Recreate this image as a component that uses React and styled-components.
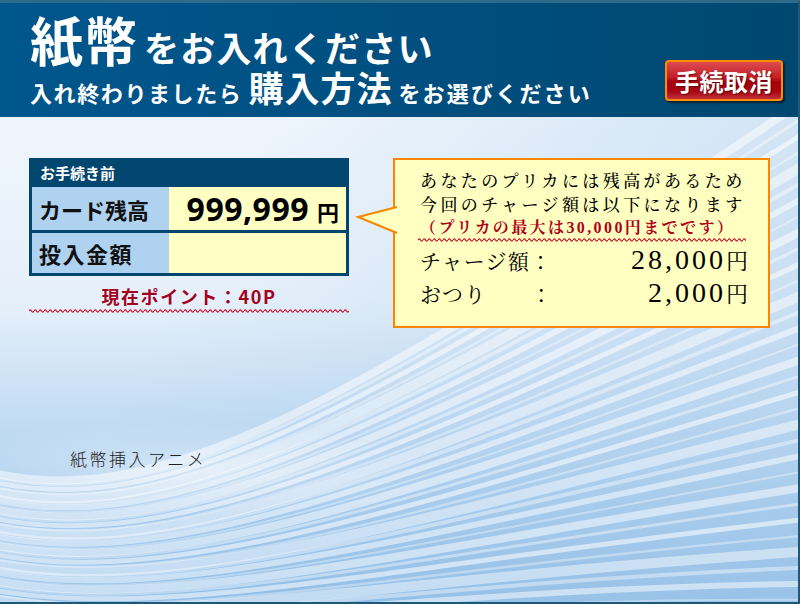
import React, { useId } from "react";
import styled, { createGlobalStyle } from "styled-components";

const Global = createGlobalStyle`
  html, body { margin: 0; padding: 0; background: #ffffff; }
  body { width: 800px; height: 604px; overflow: hidden; font-family: "Noto Sans CJK JP", "Noto Sans", sans-serif; }
`;

const SANS = `"Noto Sans CJK JP", "Noto Sans", sans-serif`;
const SERIF = `"Liberation Serif", "Noto Serif CJK JP", "Noto Sans CJK JP", serif`;

const Screen = styled.div`
  width: 800px;
  height: 604px;
  box-sizing: border-box;
  border-top: 3px solid #2e6a89;
  border-right: 2px solid #1f5877;
  border-bottom: 2px solid #1f5877;
  display: flex;
  flex-direction: column;
  overflow: hidden;
`;

const Header = styled.header`
  height: 114px;
  flex: none;
  box-sizing: border-box;
  padding: 8px 15px 0 30px;
  display: flex;
  justify-content: space-between;
  background: linear-gradient(90deg, #00578c 0%, #004f80 50%, #00486f 100%);
  color: #ffffff;
`;

const Title = styled.div`
  display: flex;
  flex-direction: column;
  font-family: ${SANS};
  font-weight: 700;
`;

const TitleLine = styled.div`
  display: flex;
  align-items: baseline;
  white-space: nowrap;
  height: ${(p) => p.$h}px;
  line-height: ${(p) => p.$h}px;
`;

const Word = styled.span`
  font-size: ${(p) => p.$size}px;
  letter-spacing: ${(p) => p.$ls || 0}px;
  margin-right: ${(p) => p.$mr || 0}px;
`;

const CancelButton = styled.button`
  align-self: flex-end;
  margin-bottom: 16px;
  width: 118px;
  height: 41px;
  box-sizing: border-box;
  border: 2px solid #ff8c00;
  border-radius: 4px;
  background: linear-gradient(180deg, #dc4b52 0%, #c42129 40%, #a3000a 55%, #a80812 80%, #c0303a 100%);
  box-shadow: 2px 2px 2px rgba(0, 0, 0, 0.55);
  color: #ffffff;
  font-family: ${SANS};
  font-weight: 700;
  font-size: 24px;
  letter-spacing: 0.5px;
  text-shadow: 1px 1px 1px rgba(60, 0, 0, 0.7);
  padding: 0;
  line-height: 36px;
`;

const Body = styled.main`
  position: relative;
  flex: 1;
  overflow: hidden;
  background: linear-gradient(180deg, #eef5fc 0%, #e6f0fa 38%, #c3dcf3 62%, #a3c9ec 82%, #8cbbe7 100%);
`;

const Backdrop = styled.svg`
  position: absolute;
  inset: 0;
  width: 100%;
  height: 100%;
  z-index: 0;
`;

const Content = styled.div`
  position: relative;
  z-index: 1;
  padding: 41px 0 0 29px;
`;

const Row = styled.div`
  display: flex;
  align-items: flex-start;
  gap: 44px;
`;

const LeftCol = styled.div`
  width: 320px;
  display: flex;
  flex-direction: column;
`;

const Panel = styled.div`
  width: 320px;
  box-sizing: border-box;
  border: 3px solid #00466e;
  background: #00466e;
  display: grid;
  grid-template-columns: 137px 1fr;
  grid-template-rows: 26px 43px 43px;
`;

const PanelHead = styled.div`
  grid-column: 1 / -1;
  color: #ffffff;
  font-family: ${SANS};
  font-weight: 700;
  font-size: 15px;
  line-height: 24px;
  padding-left: 8px;
`;

const Label = styled.div`
  background: #afd2f1;
  font-family: ${SANS};
  font-weight: 700;
  font-size: 22px;
  letter-spacing: ${(p) => p.$ls || 0}px;
  color: #111111;
  display: flex;
  align-items: center;
  padding-left: 7px;
  margin-top: ${(p) => (p.$sep ? 3 : 0)}px;
`;

const Value = styled.div`
  background: #ffffc4;
  display: flex;
  align-items: baseline;
  justify-content: flex-end;
  padding: 0 7px 0 0;
  margin-top: ${(p) => (p.$sep ? 3 : 0)}px;
  color: #000000;
  line-height: 43px;
`;

const BigNum = styled.span`
  font-family: "Open Sans", "DejaVu Sans", sans-serif;
  font-weight: 700;
  font-size: 32px;
  letter-spacing: 0.5px;
`;

const Yen = styled.span`
  font-family: ${SANS};
  font-weight: 700;
  font-size: 22px;
  margin-left: 8px;
`;

const Points = styled.div`
  margin-top: 8px;
  text-align: center;
  color: #a3001c;
  font-family: ${SANS};
  font-weight: 700;
  font-size: 18px;
  line-height: 24px;
  letter-spacing: 1.6px;
`;

const WaveWrap = styled.div`
  display: flex;
  height: 6px;
  margin-left: ${(p) => p.$ml || 0}px;
`;

const Bubble = styled.div`
  position: relative;
  width: 377px;
  height: 170px;
  box-sizing: border-box;
  border: 2px solid #fa8600;
  background: #ffffc2;
  padding: 10px 0 0 25px;
  font-family: ${SERIF};
  color: #000000;
`;

const Tail = styled.svg`
  position: absolute;
  left: -39px;
  top: 46px;
  overflow: visible;
`;

const Note = styled.div`
  font-size: 17px;
  font-weight: 500;
  letter-spacing: 3.4px;
  line-height: 24px;
  white-space: nowrap;
`;

const Caution = styled.div`
  font-size: 16px;
  letter-spacing: 2.4px;
  line-height: 18px;
  color: #b0001a;
  font-weight: 700;
  white-space: nowrap;
  margin-top: 1px;
`;

const Amount = styled.div`
  display: flex;
  align-items: baseline;
  justify-content: space-between;
  width: 328px;
  height: 33px;
  line-height: 34px;
  white-space: nowrap;
`;

const AmountLabel = styled.span`
  font-size: 21px;
  letter-spacing: 1.2px;
`;

const AmountValue = styled.span`
  font-size: 28px;
  letter-spacing: 3px;
`;

const AmountYen = styled.span`
  font-size: 22px;
  letter-spacing: 0;
`;

const AnimeLabel = styled.div`
  margin: 119px 0 0 41px;
  font-family: ${SANS};
  font-weight: 300;
  font-size: 17px;
  letter-spacing: 2.5px;
  line-height: 24px;
  color: #222222;
`;

function Wave({ width, color, ml }) {
  const id = useId().replace(/:/g, "");
  return (
    <WaveWrap $ml={ml}>
      <svg width={width} height={6}>
        <defs>
          <pattern id={id} width="5" height="6" patternUnits="userSpaceOnUse">
            <path d="M0 3 Q1.25 0.8 2.5 3 T5 3" stroke={color} strokeWidth="1.2" fill="none" />
          </pattern>
        </defs>
        <rect x="0" y="0" width={width} height="6" fill={`url(#${id})`} />
      </svg>
    </WaveWrap>
  );
}

function Streaks() {
  const n = 32;
  const paths = [];
  for (let i = 0; i < n; i++) {
    const t = i / (n - 1);
    const yL = 470 + 140 * t;
    const c1y = yL + 45 - 10 * t;
    const c2x = 330 + 60 * t;
    const c2y = 420 + 175 * t;
    const yR = 90 + 510 * t;
    const w = [8, 3, 5, 2.5, 10, 4, 6, 2][i % 8];
    const op = [0.5, 0.4, 0.55, 0.35, 0.45, 0.4, 0.5, 0.35][i % 8];
    paths.push(
      <path
        key={i}
        d={`M -20 ${yL} C 150 ${c1y} ${c2x} ${c2y} 820 ${yR}`}
        stroke="#ffffff"
        strokeOpacity={op}
        strokeWidth={w}
        fill="none"
      />
    );
  }
  return (
    <Backdrop viewBox="0 0 798 485" preserveAspectRatio="none">
      <defs>
        <linearGradient id="tint" x1="0" y1="0" x2="1" y2="0.3">
          <stop offset="0.3" stopColor="#a9cbea" stopOpacity="0" />
          <stop offset="1" stopColor="#a9cbea" stopOpacity="0.45" />
        </linearGradient>
        <radialGradient id="glow" cx="0.5" cy="0.5" r="0.5">
          <stop offset="0" stopColor="#ffffff" stopOpacity="0.4" />
          <stop offset="1" stopColor="#ffffff" stopOpacity="0" />
        </radialGradient>
      </defs>
      <rect x="0" y="0" width="798" height="485" fill="url(#tint)" />
      <g transform="translate(0,-117)">
        <ellipse cx="180" cy="470" rx="260" ry="50" fill="url(#glow)" />
        {paths}
      </g>
    </Backdrop>
  );
}

export default function App() {
  return (
    <>
      <Global />
      <Screen>
        <Header>
          <Title>
            <TitleLine $h={56}>
              <Word $size={53} $ls={1} $mr={6}>紙幣</Word>
              <Word $size={35} $ls={1.2}>をお入れください</Word>
            </TitleLine>
            <TitleLine $h={40}>
              <Word $size={22} $ls={1.6} $mr={6}>入れ終わりましたら</Word>
              <Word $size={35} $ls={1} $mr={6}>購入方法</Word>
              <Word $size={22} $ls={2.2}>をお選びください</Word>
            </TitleLine>
          </Title>
          <CancelButton type="button">手続取消</CancelButton>
        </Header>
        <Body>
          <Streaks />
          <Content>
            <Row>
              <LeftCol>
                <Panel>
                  <PanelHead>お手続き前</PanelHead>
                  <Label>カード残高</Label>
                  <Value>
                    <BigNum>999,999</BigNum>
                    <Yen>円</Yen>
                  </Value>
                  <Label $sep $ls={1.5}>投入金額</Label>
                  <Value $sep />
                </Panel>
                <Points>現在ポイント：40P</Points>
                <Wave width={320} color="#d0102a" />
              </LeftCol>
              <Bubble>
                <Tail width="44" height="28" viewBox="0 0 44 28">
                  <polygon points="2,11 41,1 41,27" fill="#ffffc2" />
                  <polyline points="41,1 2,11 41,27" fill="none" stroke="#fa8600" strokeWidth="2" strokeLinejoin="miter" />
                </Tail>
                <Note>あなたのプリカには残高があるため</Note>
                <Note>今回のチャージ額は以下になります</Note>
                <Caution>（プリカの最大は30,000円までです）</Caution>
                <Wave width={328} color="#d0102a" ml={-2} />
                <Amount>
                  <AmountLabel>チャージ額：</AmountLabel>
                  <AmountValue>
                    28,000<AmountYen>円</AmountYen>
                  </AmountValue>
                </Amount>
                <Amount>
                  <AmountLabel>おつり　　：</AmountLabel>
                  <AmountValue>
                    2,000<AmountYen>円</AmountYen>
                  </AmountValue>
                </Amount>
              </Bubble>
            </Row>
            <AnimeLabel>紙幣挿入アニメ</AnimeLabel>
          </Content>
        </Body>
      </Screen>
    </>
  );
}
